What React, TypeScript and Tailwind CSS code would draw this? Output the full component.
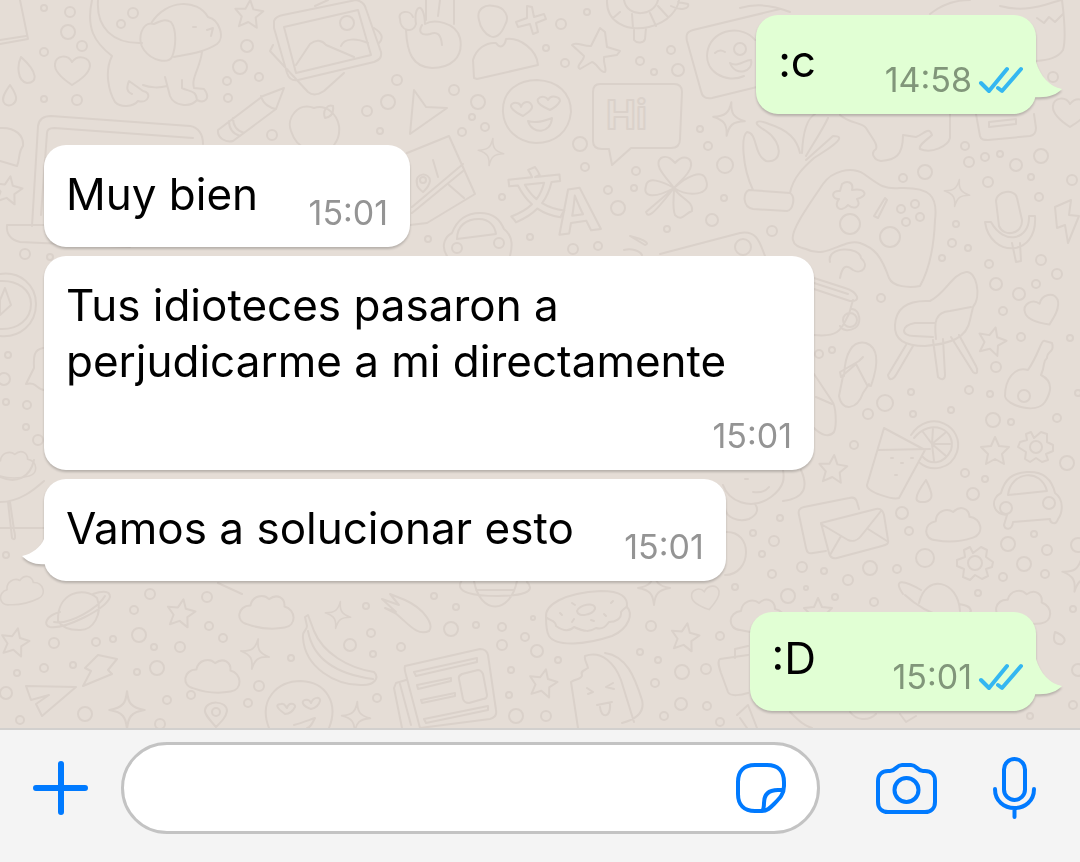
import React from 'react';

type Dot = [x: number, y: number, r: number];
type Spot = [x: number, y: number, scale: number, angle: number];

const DOTS: Dot[] = [
	[44, 8, 4], [70, 12, 6], [68, 32, 8], [82, 46, 6], [44, 52, 5], [44, 99, 4], [77, 100, 6], [133, 13, 6], [121, 24, 5],
	[247, 46, 7], [240, 67, 8], [259, 77, 5], [227, 81, 5], [228, 98, 5], [272, 135, 6], [367, 111, 6], [388, 102, 8],
	[397, 80, 6], [380, 131, 4], [454, 90, 6], [478, 102, 8], [472, 117, 4], [485, 127, 5], [462, 132, 5], [546, 48, 4],
	[561, 24, 6], [565, 63, 5], [587, 12, 4], [671, 50, 5], [640, 61, 5], [654, 72, 4], [678, 70, 7], [580, 144, 8],
	[585, 167, 5], [636, 171, 5], [608, 190, 5], [618, 208, 8], [634, 188, 4], [502, 197, 4], [700, 129, 4], [708, 146, 5],
	[725, 165, 9], [724, 198, 4], [712, 220, 7], [667, 229, 4], [772, 231, 6], [598, 246, 5], [573, 249, 6], [530, 237, 4],
	[428, 239, 4], [1053, 77, 6], [965, 146, 5], [969, 162, 6], [985, 157, 5], [1000, 154, 4], [1016, 165, 7], [1041, 156, 8],
	[1031, 177, 4], [1072, 180, 6], [988, 182, 6], [1039, 197, 5], [903, 178, 5], [925, 172, 8], [956, 224, 4], [952, 243, 5],
	[968, 248, 4], [942, 258, 4], [989, 264, 5], [1041, 260, 6], [1057, 274, 6], [996, 284, 7], [1036, 284, 5], [1019, 294, 7],
	[1003, 311, 5], [881, 298, 5], [1021, 337, 5], [1070, 338, 4], [996, 367, 6], [819, 354, 5], [832, 350, 4], [911, 392, 4],
	[885, 403, 9], [868, 414, 6], [913, 414, 4], [969, 390, 5], [990, 394, 4], [951, 410, 4], [993, 420, 8], [1011, 422, 4],
	[1057, 418, 5], [1078, 393, 4], [854, 445, 5], [965, 473, 5], [985, 479, 4], [1067, 463, 8], [973, 494, 7], [902, 513, 7],
	[909, 531, 5], [780, 518, 4], [753, 533, 4], [774, 541, 6], [762, 554, 4], [772, 574, 5], [802, 567, 6], [824, 571, 4],
	[870, 568, 8], [897, 569, 5], [848, 580, 6], [788, 596, 8], [806, 588, 3], [835, 597, 4], [874, 602, 5], [925, 558, 10],
	[1034, 534, 4], [1008, 544, 8], [1047, 550, 6], [1024, 564, 8], [1045, 574, 5], [1003, 577, 5], [978, 593, 4],
	[1073, 609, 4], [735, 587, 4], [1078, 545, 8], [1073, 705, 5], [1030, 716, 4], [1078, 670, 7], [150, 594, 6],
	[134, 610, 5], [207, 597, 6], [139, 635, 8], [154, 647, 4], [180, 647, 6], [209, 626, 5], [223, 638, 5], [54, 643, 6],
	[96, 642, 5], [113, 639, 4], [44, 668, 5], [73, 665, 4], [17, 673, 4], [157, 668, 8], [137, 672, 4], [191, 695, 5],
	[167, 700, 5], [248, 703, 5], [259, 686, 6], [291, 658, 4], [85, 714, 8], [20, 720, 5], [6, 693, 7], [371, 633, 5],
	[350, 645, 7], [373, 654, 4], [377, 698, 5], [366, 606, 4], [160, 724, 6], [6, 555, 4], [434, 596, 4], [456, 607, 4],
	[451, 629, 8], [476, 625, 4], [502, 627, 5], [401, 647, 5], [502, 645, 6], [525, 637, 5], [533, 618, 3], [537, 651, 7],
	[558, 660, 4], [511, 670, 4], [509, 695, 4], [516, 716, 8], [546, 716, 6], [651, 626, 6], [720, 636, 5], [640, 652, 4],
	[658, 660, 4], [682, 672, 8], [706, 669, 6], [655, 683, 5], [681, 704, 7], [707, 706, 5], [664, 716, 5], [720, 722, 5],
	[25, 254, 6], [50, 257, 4], [8, 355, 4], [4, 379, 7], [6, 402, 4], [27, 405, 5], [26, 427, 4], [38, 440, 6],
];

const STARS: Spot[] = [
	[249, 14, 1, 5], [8, 190, 1, 10], [833, 469, 1, 5], [992, 341, 1, 15], [995, 451, 1, 0], [181, 613, 1, 10],
	[15, 642, 1, 12], [543, 683, 1, 12], [685, 637, 1, 10], [818, 612, 1, 0],
];

const SPARKLES: Spot[] = [
	[729, 119, 1, 8], [491, 152, 0.8, 8], [957, 193, 0.8, 10], [338, 615, 0.8, 10], [255, 654, 0.9, 12], [127, 710, 1.1, 0],
	[356, 717, 0.9, 5], [654, 588, 1, 0], [1078, 575, 1, 12],
];

const CLOUDS: Spot[] = [
	[267, 611, 1, 5], [213, 675, 1, 5], [21, 590, 0.8, -12], [953, 524, 1, -4], [1024, 606, 1, 8], [758, 615, 1, 0],
	[14, 464, 0.8, 0],
];

const HEARTS: Spot[] = [
	[72, 70, 1, 0], [1043, 311, 1, -25], [706, 598, 0.8, -15], [1070, 112, 1, 0],
];

const STAR = 'M0-14L4-5L14-4L7 3L9 13L0 8L-9 13L-7 3L-14-4L-4-5Z';
const SPARKLE = 'M0-17C1-6 4-2 16 0C4 2 1 6 0 17C-1 6-4 2-16 0C-4-2-1-6 0-17Z';
const CLOUD = 'M-18 15C-31 14-30-3-17-4C-16-14-5-17 1-12C9-19 17-14 17-6C29-4 31 12 19 15C7 18-7 18-18 15Z';
const HEART = 'M0 15C-9 9-18 1-17-6C-16-15-4-16 0-8C6-16 18-13 18-4C17 4 8 10 0 15Z';

const DOODLES = [
	// book corner, drops
	'M0 44L28 39L20 0M0 40L26 36M21 57C17 65 17 81 27 83C38 83 38 72 21 57ZM10 85C5 92 0 100 5 104C10 108 17 103 16 97C15 92 12 88 10 85Z',
	// dog
	'M92 0C86 28 94 42 112 56C104 72 109 92 115 102C121 108 133 107 138 101C149 104 152 92 143 91L129 81C126 88 127 92 132 94M98 0C96 28 113 44 142 43M154 24C142 20 136 40 144 50C152 61 168 64 172 57C176 47 177 30 171 22C164 18 159 22 154 24ZM152 22C166 0 197-2 208 17C220 20 225 38 217 44C205 52 190 54 174 57M202 52C200 68 191 78 194 88L204 89C211 98 205 104 197 100C190 108 174 106 170 96L165 77M143 85C150 88 160 88 167 86M182 80V88C190 92 196 90 197 100M207 30L213 28L211 36M193 27H196',
	// framed photo
	'M274 21C275 18 278 16 283 15L356 0C362 1 365 5 366 9L381 52C382 58 379 60 374 62L298 80C293 81 289 79 287 73L274 28ZM284 27L358 10L371 55L296 73ZM296 65L310 44C316 39 322 40 326 45L354 57M341 46C344 38 356 38 368 43M273 45L270 51L308 92C313 96 318 95 324 91L344 73M374 28C382 33 384 38 379 43M315 6L328 0',
	// pencil and apple
	'M218 130L263 96L284 88L276 109L233 141C226 143 217 138 218 130ZM261 96C263 104 270 108 276 109M229 121C229 129 234 134 240 136M233 118C233 126 238 131 244 133M314 108C298 102 286 118 291 131C294 140 298 146 306 148M314 108C326 104 337 114 339 126C340 134 338 140 334 145M325 118C322 110 328 104 333 106C334 113 331 117 325 118Z',
	// laptop
	'M32 226L38 126C39 119 44 116 51 116L190 126C198 127 203 134 203 144M41 215L47 133C47 129 50 128 54 128L193 138M7 225H220M7 225C6 234 11 240 20 242L130 247',
	// peace hand
	'M400 19C397 11 410 9 413 17M400 19C400 31 413 34 416 24C413 5 424 0 425 24C434 19 456 22 460 38C464 58 450 68 432 68C412 67 407 52 406 30M422 25C418 32 421 36 430 34C437 31 441 34 442 45M426 20V0M438 16L440 0M454 24V0',
	// person
	'M479 20C476 9 485 4 494 6C505 7 510 17 505 25C501 35 495 39 490 36C485 34 480 27 479 20ZM474 78L473 60C476 49 486 42 496 43C501 50 505 45 506 39C520 37 537 50 538 65L477 79Z',
	// plus, starfish
	'M527 6L532 7L534 17L544 14L546 19L536 23L538 32L533 34L530 24L518 27L516 22L527 18ZM600 28L605 32L607 47L620 51L617 55L604 57C603 63 607 69 605 72C600 73 597 63 592 62L580 69C575 66 584 61 584 56L572 45C575 41 585 47 591 46Z',
	// lifebuoy
	'M607 0C606 22 627 32 649 27C670 22 678 8 679 0M624 0C627 18 654 17 658 0M620 12L613 18M632 14L633 28M650 13L656 26M658 6L668 17M634 28V40C637 44 644 43 645 39L646 28M671 6C680 11 690 9 688 4L678 2',
	// wink card
	'M780 9L693 30C686 32 686 36 687 41L701 91C702 97 706 99 712 98L757 87M755 40C743 25 714 28 708 49C702 72 727 84 744 76M715 53C718 50 722 50 725 52M730 63C738 68 746 59 751 60C754 71 736 78 730 63Z',
	// paper plane arrow
	'M414 90L426 107L447 108L410 134Z',
	// in-love face
	'M503 112C502 90 519 80 537 80C558 81 571 93 571 112C569 132 555 143 536 143C517 142 504 129 503 112ZM523 116C516 113 508 107 512 104C516 101 521 104 521 107C523 101 530 100 532 106C533 110 527 113 523 116ZM550 110C543 107 536 103 538 99C541 95 547 97 548 100C551 94 560 97 560 101C558 105 554 108 550 110ZM528 121C538 124 546 120 552 118C551 134 532 135 528 121Z',
	// speech bubble
	'M600 84H674C679 84 682 87 682 92L680 139C680 145 677 148 671 148H631L612 165L609 149H602C596 149 593 146 593 141V92C593 87 595 84 600 84Z',
	// map, clover
	'M407 153L449 136L475 194L427 223L410 225M412 207L463 164M412 213L463 171M449 185L464 198M417 184C414 172 430 172 430 181C429 187 425 190 423 192C419 189 417 187 417 184ZM433 160L438 177',
	'M674 188C665 176 653 165 661 158C667 155 671 158 675 163C683 154 692 157 691 166C690 174 680 181 674 188ZM674 188C662 181 647 176 646 186C642 198 656 198 674 188ZM674 188C686 177 703 168 706 180C712 196 688 197 674 188ZM674 188C679 198 694 201 692 211C684 214 682 222 675 215C672 207 674 198 674 188ZM674 188L646 212C648 218 652 216 674 188',
	// car behind the first messages
	'M447 256C440 245 446 236 452 233C457 220 466 213 480 213C494 213 500 220 504 229C514 237 512 248 510 256M457 239C457 226 466 219 479 219C490 219 495 227 496 234ZM452 248A5 5 0 1 0 462 248A5 5 0 1 0 452 248M494 243A5 5 0 1 0 504 243A5 5 0 1 0 494 243',
	// camera corner
	'M660 254L740 233C758 230 760 244 765 256M630 236L645 245C650 244 646 240 630 236ZM624 250C632 248 640 251 642 255M735 247A8 8 0 1 0 751 247A8 8 0 1 0 735 247',
	// plant
	'M753 190C742 167 741 136 747 132C758 133 753 154 766 161C782 164 784 143 766 131C750 122 757 119 769 124C788 130 797 139 800 153M802 153C803 130 808 118 815 114M806 156C813 144 823 129 828 118M806 160L833 136C846 136 838 143 814 158C805 166 793 177 790 193M749 190L790 193C796 197 793 210 787 211L753 209C742 207 743 192 749 190Z',
	// gamepad
	'M793 240C790 231 810 203 823 184C832 171 851 166 864 174C877 183 883 190 900 188C930 187 938 196 935 220C934 246 929 270 920 286C909 288 893 287 889 278C881 255 874 248 860 243C843 238 827 260 806 249C798 247 794 245 793 240ZM842 184C847 180 854 182 852 190C866 188 869 196 857 199C862 207 854 210 848 205C840 214 833 206 839 199C832 200 830 190 840 191ZM885 198L874 216L878 218L887 200Z',
	'M840 224A10 10 0 1 0 860 224A10 10 0 1 0 840 224M880 237A10 10 0 1 0 900 237A10 10 0 1 0 880 237M897 209A4 4 0 1 0 905 209A4 4 0 1 0 897 209M911 204A4 4 0 1 0 919 204A4 4 0 1 0 911 204M902 222A4 4 0 1 0 910 222A4 4 0 1 0 902 222M916 217A4 4 0 1 0 924 217A4 4 0 1 0 916 217',
	// cat and calendar peeking out from the bubble
	'M840 115C850 124 862 122 866 128C872 138 878 144 876 149C870 153 874 160 881 161C895 160 903 156 903 135L916 137C924 134 929 126 932 135C928 139 918 145 920 149C932 154 948 146 950 138V114M976 114L980 136C981 140 984 140 988 140L1030 136C1035 135 1036 132 1036 128L1034 114M989 122L1016 119V124L989 127Z',
	'M740 8C760 2 780 8 790 12M930 14C945 2 960 0 970 0M1000 6C1030 14 1050 2 1062 0C1064 16 1066 40 1063 50C1058 58 1048 60 1036 61M1037 18L1044 23L1049 17L1055 22L1063 14',
	// microphone and bolt
	'M996 201C996 191 1015 188 1017 198L1022 220C1023 234 1004 238 999 226ZM985 222C990 258 1038 258 1035 216L1029 216C1030 240 1004 246 991 222ZM1012 243L1016 262L1021 261L1020 243M1055 207L1071 200L1069 215L1079 216L1068 243L1065 225L1057 228Z',
	// croissant, teacup
	'M830 262C826 246 860 246 861 258C870 266 862 275 853 270C845 263 842 268 840 278M814 278L845 288C858 292 862 302 850 301L814 289M814 283L848 294M853 300L849 314C842 326 842 338 814 335M852 309C860 310 862 323 855 328C848 332 842 330 840 326M843 320A7 7 0 1 0 857 320A7 7 0 1 0 843 320',
	// flip-flops
	'M844 376C845 352 853 340 866 343C880 348 878 366 871 386L867 385L856 364L841 377L840 372L859 361L863 357M843 376L839 396C842 412 857 410 863 393L869 384M814 374L832 401C836 406 837 425 834 432C829 438 821 435 814 428M816 397L832 404',
	// chair
	'M930 301C910 300 896 306 895 325C894 340 905 346 925 346C950 344 967 338 970 320L973 307C982 296 976 270 966 272C952 274 946 293 930 301ZM936 339C934 322 935 312 950 311L971 307M935 323H915C901 325 900 336 914 336L933 337M906 345L888 375C889 381 893 380 896 375L913 346M933 340L938 377C942 381 945 379 945 375L943 339M951 337L973 372C978 376 978 370 976 366L959 335',
	// guitar
	'M1028 370C1040 352 1041 339 1045 341L1052 343C1055 353 1046 351 1047 358C1042 362 1046 364 1041 375C1055 382 1050 394 1045 402C1036 415 1006 405 1005 396C1005 380 1014 366 1028 370ZM1018 396A6 6 0 1 0 1030 396A6 6 0 1 0 1018 396',
	// juice
	'M884 428L867 485C866 492 893 500 899 498L925 450L884 428ZM878 450L930 449M911 435C930 407 965 427 957 452C951 470 931 472 920 463M914 438C931 417 957 430 951 450C944 465 930 465 923 457M932 444L923 432M932 444L933 428M932 444L945 433M932 444L950 444M932 444L946 456M932 444L934 461M891 458H893M901 463H903M911 458H913M895 475H897',
	// gears
	'M1031 432L1034 438L1041 432L1047 434L1047 442L1053 445L1053 451L1046 454L1048 460L1042 462L1036 458L1030 462L1025 459L1026 452L1018 447L1020 442L1027 440L1026 434ZM1030 447A6 6 0 1 0 1042 447A6 6 0 1 0 1030 447',
	'M970 547L973 553L981 547L987 550L986 557L993 562L992 567L986 569L988 576L982 579L975 575L970 580L963 577L964 569L957 566L957 560L965 557L964 550ZM968 563A7 7 0 1 0 982 563A7 7 0 1 0 968 563',
	// car
	'M1004 525L1007 515C992 514 990 499 1001 493C1005 479 1012 473 1027 472C1044 471 1052 480 1055 493C1065 500 1062 514 1058 519C1056 526 1050 523 1050 519L1013 522C1012 531 1005 530 1004 525ZM1008 495C1011 471 1041 468 1047 491ZM1000 508A6 6 0 1 0 1012 508A6 6 0 1 0 1000 508M1043 503A6 6 0 1 0 1055 503A6 6 0 1 0 1043 503',
	// envelopes
	'M821 523L876 509C881 508 883 511 884 515L888 540C889 544 886 545 882 546L837 558C833 559 830 557 829 553ZM821 524L848 540C853 542 858 540 861 536L881 511M830 555L841 536M887 541L868 529M859 509L857 502C856 498 853 497 849 498L804 507C799 508 798 511 799 515L806 548C807 553 809 554 813 553L826 551',
	// drops and bird
	'M926 480C913 498 914 503 925 502C934 500 933 494 926 480ZM1055 632C1052 642 1056 645 1062 644C1068 640 1063 635 1055 632ZM723 485C728 500 750 512 771 497C786 486 784 476 783 470M745 479H748M753 492C760 493 766 491 769 487M801 470C808 486 806 498 783 501M725 505C724 519 740 522 749 519C759 514 758 508 755 504M725 532C754 530 752 575 725 575',
	// planets
	'M919 603C926 573 958 580 960 611M903 594C892 578 904 580 921 590M905 595C930 618 962 624 971 611C970 606 965 605 959 604',
	'M58 621C57 592 84 586 97 598C103 614 93 631 79 630C66 630 61 626 58 621ZM60 612C47 615 42 625 50 627C66 629 106 609 110 597C110 589 99 592 93 594M54 622C70 625 98 608 105 596',
	'M462 580C453 593 475 596 498 596C521 596 537 592 527 582M474 581C480 615 510 615 517 581M476 590H514',
	// bolt, folded plane, banana
	'M98 655L117 659L108 670L112 674L83 686L91 671L85 668ZM26 686L76 687L42 716L36 704L49 695L31 700ZM305 617L308 615L314 631C323 653 348 668 374 672C380 678 374 685 363 685C335 686 305 667 303 638C302 630 307 631 307 626ZM308 631C313 658 335 674 373 679',
	// face at the bottom edge, map pin
	'M269 728C258 700 277 681 301 681C326 682 339 703 329 728M285 714C275 707 276 704 281 704C285 703 285 706 287 708C289 701 296 704 295 707C293 711 289 714 285 714ZM311 709C302 706 301 701 305 700C309 699 310 701 311 703C314 696 321 697 320 701C319 705 315 708 311 709ZM294 725C302 723 309 720 315 718C312 724 310 728 307 728M216 727C207 717 204 713 205 710C206 700 227 700 227 711C226 717 222 721 216 727ZM212 712A4 4 0 1 0 220 712A4 4 0 1 0 212 712',
	// hand
	'M382 599L399 605L390 594L405 600C425 609 434 625 429 631C417 637 407 622 395 613L385 608L396 612ZM218 583L242 594',
	// newspaper
	'M405 666L480 649C484 649 487 651 488 655L496 710C497 715 494 718 490 719L420 728M405 666C404 669 405 672 406 675L420 728M414 672L477 658V662L416 676ZM417 685L451 678V681L418 689ZM421 700L455 693V696L422 703ZM424 719L488 706V710L426 723ZM462 674L478 670C481 670 482 672 483 674L487 695C487 698 485 699 483 699L469 703C466 703 464 702 463 699L459 679C458 676 460 675 462 674ZM406 680L396 683L394 688L402 728M400 684L411 725',
	// donut
	'M546 617C545 605 563 593 601 591C621 591 628 597 627 607C633 613 630 628 612 636C585 645 556 647 549 636C546 631 546 625 546 617ZM546 617C550 621 556 620 556 626C563 631 569 632 574 627C585 632 590 632 596 628C603 630 606 626 609 622C615 622 622 619 621 612C623 609 626 608 627 606M577 611C578 605 596 601 595 609C592 615 578 618 577 611ZM560 613L562 615M572 603L575 605M611 603L613 601M604 614L606 616M591 620L594 621M572 622L574 619',
	// popsicle
	'M578 728L571 682C576 678 582 680 582 675C580 671 585 670 588 668C587 663 584 660 585 656C602 650 615 664 621 680L634 722M605 653C627 656 635 678 642 700C645 712 637 719 622 723M587 688L593 692L588 694M613 683L606 687L614 689M597 705L612 702M600 707C601 719 611 718 610 704',
	// camera, books at the bottom
	'M748 655L720 659C717 661 719 667 721 673L728 692C730 697 742 695 748 693M735 658V649L748 646M737 715L748 705L757 728M740 718L747 728M790 712C800 722 805 726 812 728M850 712C856 720 868 722 876 714M900 714L906 722L916 716',
	// items along the left edge
	'M0 128C16 127 24 136 23 146C18 152 20 160 17 166L0 161M0 274C20 271 36 285 36 304C36 324 20 338 0 336M0 281C18 280 31 290 31 304C31 319 18 330 0 329M5 288L0 300V315L11 305ZM43 348C32 350 34 360 34 368L26 384C36 381 37 390 44 390M0 477C16 484 30 478 34 460M0 502C20 502 35 489 44 481M8 502L12 538C15 541 16 538 14 530L10 502M0 528H44',
];

const place = ([x, y, scale, angle]: Spot) => `translate(${x} ${y}) rotate(${angle}) scale(${scale})`;

const Wallpaper: React.FC = () => {
	return (
		<svg
			aria-hidden="true"
			className="absolute inset-0 h-full w-full"
			viewBox="0 0 1080 728"
			preserveAspectRatio="xMidYMid slice"
			fill="none"
			stroke="#dad1ca"
			strokeWidth="2"
			strokeLinecap="round"
			strokeLinejoin="round"
		>
			{DOTS.map(([x, y, r]) => <circle key={`${x}-${y}`} cx={x} cy={y} r={r - 1} />)}
			{STARS.map((spot, i) => <path key={i} d={STAR} transform={place(spot)} />)}
			{SPARKLES.map((spot, i) => <path key={i} d={SPARKLE} transform={place(spot)} />)}
			{CLOUDS.map((spot, i) => <path key={i} d={CLOUD} transform={place(spot)} />)}
			{HEARTS.map((spot, i) => <path key={i} d={HEART} transform={place(spot)} />)}
			{DOODLES.map((d, i) => <path key={i} d={d} />)}
			<circle cx="347" cy="23" r="7" />
			<circle cx="740" cy="49" r="6" />
			<circle cx="423" cy="180" r="3" />
			<text x="606" y="129" className="font-['Inter',sans-serif] text-[40px] font-bold">Hi</text>
			<text x="558" y="235" transform="rotate(-8 558 235)" className="font-['Inter',sans-serif] text-[60px] font-bold">A</text>
			<text x="510" y="218" transform="rotate(-6 510 218)" className="font-['Noto_Sans_CJK_SC',sans-serif] text-[56px] font-bold">文</text>
		</svg>
	);
};

const ReadTicks: React.FC = () => {
	return (
		<svg role="img" aria-label="Leído" className="h-[29px] w-[46px]" viewBox="0 0 46 29" fill="none" stroke="#34b7f1" strokeWidth="4" strokeLinecap="round" strokeLinejoin="round">
			<path d="M3 17L11 25L29 3M20 22L24 25L43 3" />
		</svg>
	);
};

interface BubbleProps {
	text: string;
	time: string;
	stacked?: boolean;
	tail?: boolean;
}

const Incoming: React.FC<BubbleProps> = ({ text, time, stacked, tail }) => {
	return (
		<div className={`relative flex max-w-[770px] self-start rounded-[22px] bg-white px-[22px] pt-[21px] pb-3.5 drop-shadow-[0_2px_1px_rgba(0,0,0,0.2)] ${stacked ? 'flex-col' : 'gap-[42px]'}`}>
			{tail && (
				<svg aria-hidden="true" className="absolute bottom-4 -left-[22px] h-[26px] w-[24px]" viewBox="0 0 24 26" fill="#fff">
					<path d="M24 0H22C19 8 10 15 0 17C6 23 13 26 24 25Z" />
				</svg>
			)}
			<p className="text-[44px] leading-[56px] text-black">{text}</p>
			<time className="mt-[27px] min-w-[88px] self-end text-right text-[34px] leading-10 text-[#949494]">{time}</time>
		</div>
	);
};

const Outgoing: React.FC<BubbleProps> = ({ text, time }) => {
	return (
		<div className="relative flex max-w-[770px] gap-[68px] self-end rounded-[22px] bg-[#e1ffd4] pt-[18px] pr-3 pb-3.5 pl-[22px] drop-shadow-[0_2px_1px_rgba(0,0,0,0.2)]">
			<svg aria-hidden="true" className="absolute -right-[26px] bottom-4 h-[36px] w-[28px]" viewBox="0 0 28 36" fill="#e1ffd4">
				<path d="M0 0H2C6 14 16 25 28 27C22 33 14 36 0 35Z" />
			</svg>
			<p className="text-[44px] leading-[56px] text-black">{text}</p>
			<div className="mt-[27px] flex items-center gap-1.5 self-end">
				<time className="min-w-[88px] text-right text-[34px] leading-10 text-[#81967a]">{time}</time>
				<ReadTicks />
			</div>
		</div>
	);
};

const Composer: React.FC = () => {
	return (
		<form className="flex items-center border-t-2 border-[#d2d0ce] bg-[#f4f4f4] pt-3 pr-11 pb-7 pl-[33px] text-[#007aff]">
			<button type="button" aria-label="Adjuntar">
				<svg className="h-14 w-14" viewBox="0 0 56 56" fill="none" stroke="currentColor" strokeWidth="6" strokeLinecap="round">
					<path d="M28 4V52M3 28H52" />
				</svg>
			</button>
			<div className="ml-8 flex h-[92px] min-w-0 flex-1 items-center rounded-full border-3 border-[#c3c3c3] bg-white pr-[31px] pl-10">
				<input type="text" aria-label="Mensaje" className="min-w-0 flex-1 text-[44px] leading-[56px] text-black outline-none" />
				<button type="button" aria-label="Stickers">
					<svg className="h-[50px] w-[50px]" viewBox="0 0 50 50" fill="none" stroke="currentColor" strokeWidth="4" strokeLinecap="round" strokeLinejoin="round">
						<path d="M26 48H19C8 48 2 42 2 31V19C2 8 8 2 19 2H31C42 2 48 8 48 19V23C48 31 44 35 38 41C34 45 31 48 26 48ZM47 27H42C33 27 28 31 28 40C28 44 28 46 26 48" />
					</svg>
				</button>
			</div>
			<button type="button" aria-label="Cámara" className="ml-14">
				<svg className="h-[51px] w-[61px]" viewBox="0 0 61 51" fill="none" stroke="currentColor" strokeWidth="4" strokeLinejoin="round">
					<path d="M12 8H14C17 8 18 7 20 5C22 3 23 2 26 2H35C38 2 39 3 41 5C43 7 44 8 47 8H49C55 8 59 12 59 18V39C59 45 55 49 49 49H12C6 49 2 45 2 39V18C2 12 6 8 12 8Z" />
					<circle cx="30.5" cy="27" r="12" />
				</svg>
			</button>
			<button type="button" aria-label="Mensaje de voz" className="ml-14">
				<svg className="h-[62px] w-[43px]" viewBox="0 0 43 62" fill="none" stroke="currentColor" strokeWidth="4" strokeLinecap="round">
					<rect x="11" y="2" width="21" height="41" rx="10.5" />
					<path d="M2 32C2 44 11 51 21.5 51S41 44 41 32M21.5 51V60" />
				</svg>
			</button>
		</form>
	);
};

const App: React.FC = () => {
	return (
		<div className="flex min-h-screen flex-col font-['Inter','Liberation_Sans',sans-serif]">
			<main className="relative flex-1 overflow-hidden bg-[#e5ddd6]">
				<Wallpaper />
				<div className="relative flex flex-col gap-[31px] px-11 pt-[15px] pb-4">
					<Outgoing text=":c" time="14:58" />
					<div className="flex flex-col gap-[9px]">
						<Incoming text="Muy bien" time="15:01" />
						<Incoming text="Tus idioteces pasaron a perjudicarme a mi directamente" time="15:01" stacked />
						<Incoming text="Vamos a solucionar esto" time="15:01" tail />
					</div>
					<Outgoing text=":D" time="15:01" />
				</div>
			</main>
			<Composer />
		</div>
	);
};

export default App;
